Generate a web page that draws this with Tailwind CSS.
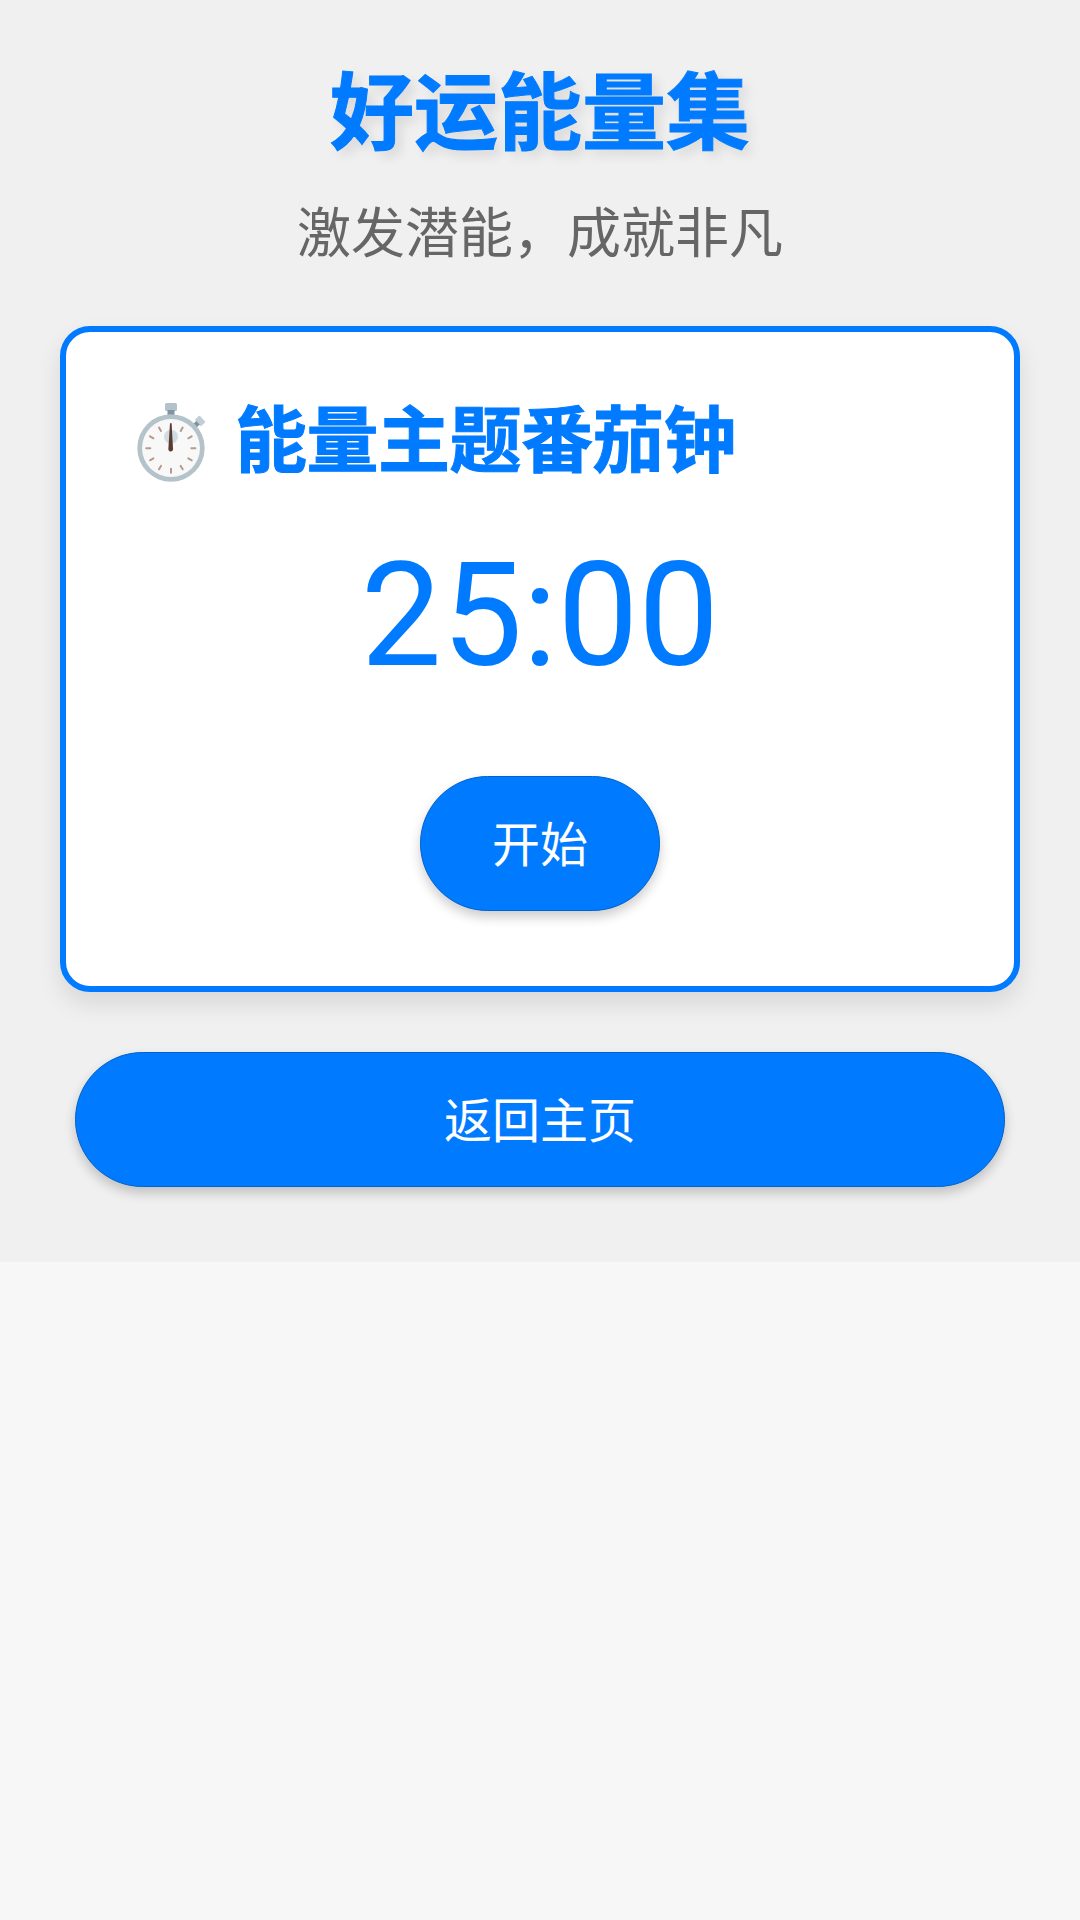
<!DOCTYPE html>
<html lang="zh-CN">
  <head>
    <meta charset="UTF-8" />
    <meta name="viewport" content="width=device-width, initial-scale=1.0" />
    <title>好运能量集</title>
    <script src="https://cdn.jsdelivr.net/npm/@tailwindcss/browser@4"></script>
  </head>

  <body class="bg-[#f7f7f7] h-[1920px] font-['Roboto','Noto_Sans_CJK_SC',sans-serif]">
    <main class="bg-[#f0f0f0] h-[1262px] px-[60px] pt-[64px] flex flex-col items-center">
      <h1 class="text-[84px] leading-[102px] font-bold [-webkit-text-stroke:1px_#007bff] text-[#007bff] [text-shadow:6px_6px_12px_rgba(0,0,0,0.1)]">好运能量集</h1>
      <p class="mt-[30px] text-[54px] leading-[78px] text-[#666666]">激发潜能，成就非凡</p>

      <section class="mt-[52px] w-full h-[666px] shrink-0 bg-white border-[6px] border-[#007bff] rounded-[30px] shadow-[0_12px_24px_rgba(0,0,0,0.1)] px-[60px] pt-[66px] flex flex-col">
        <h2 class="flex items-center gap-[23px] text-[72px] leading-[88px] font-bold [-webkit-text-stroke:1px_#007bff] tracking-[-0.5px] text-[#007bff]">
          <svg class="w-[86px] h-[84px] shrink-0" viewBox="0 0 86 84">
            <rect x="39" y="3" width="12" height="8" rx="1.5" fill="#b4c3ca" />
            <rect x="41.5" y="10" width="7" height="6" fill="#7f949f" />
            <g transform="rotate(47 45 48)">
              <rect x="40.5" y="5" width="9" height="6.5" rx="1" fill="#c2ced4" />
              <rect x="42.5" y="11" width="5" height="5" fill="#7f949f" />
            </g>
            <circle cx="45" cy="48" r="33.7" fill="#b4c3ca" />
            <circle cx="45" cy="48" r="29" fill="#f8f8f8" />
            <circle cx="45" cy="36.7" r="7" fill="#cfdde3" />
            <path d="M45 68.7v4M54.7 31l2-3.4M62.3 38.3l3.4-2M65.3 48.3h4M62.3 58.3l3.4 2M54.7 65.9l2 3.4M35 65.9l-2 3.4M27.4 58.3l-3.4 2M24.3 48.3h-4M27.4 38.3l-3.4-2M35 31l-2-3.4" stroke="#b59a8c" stroke-width="2" stroke-linecap="round" />
            <path d="M44 23.3h1.6l1.4 25a2.4 2.4 0 1 1-4.6 0z" fill="#5b3a30" />
          </svg>
          <span>能量主题番茄钟</span>
        </h2>
        <div class="mt-[46px] text-center text-[144px] leading-[168px] text-[#007bff]">25:00</div>
        <button class="mt-[76px] pt-[4px] self-center w-[240px] h-[135px] shrink-0 rounded-full bg-[#007bff] border border-[#0062cc] text-white text-[48px] shadow-[0_6px_12px_rgba(0,0,0,0.2)]">开始</button>
      </section>

      <button class="mt-[60px] pt-[4px] w-[930px] h-[135px] shrink-0 rounded-full bg-[#007bff] border border-[#0062cc] text-white text-[48px] shadow-[0_6px_12px_rgba(0,0,0,0.2)]">返回主页</button>
    </main>
  </body>
</html>
